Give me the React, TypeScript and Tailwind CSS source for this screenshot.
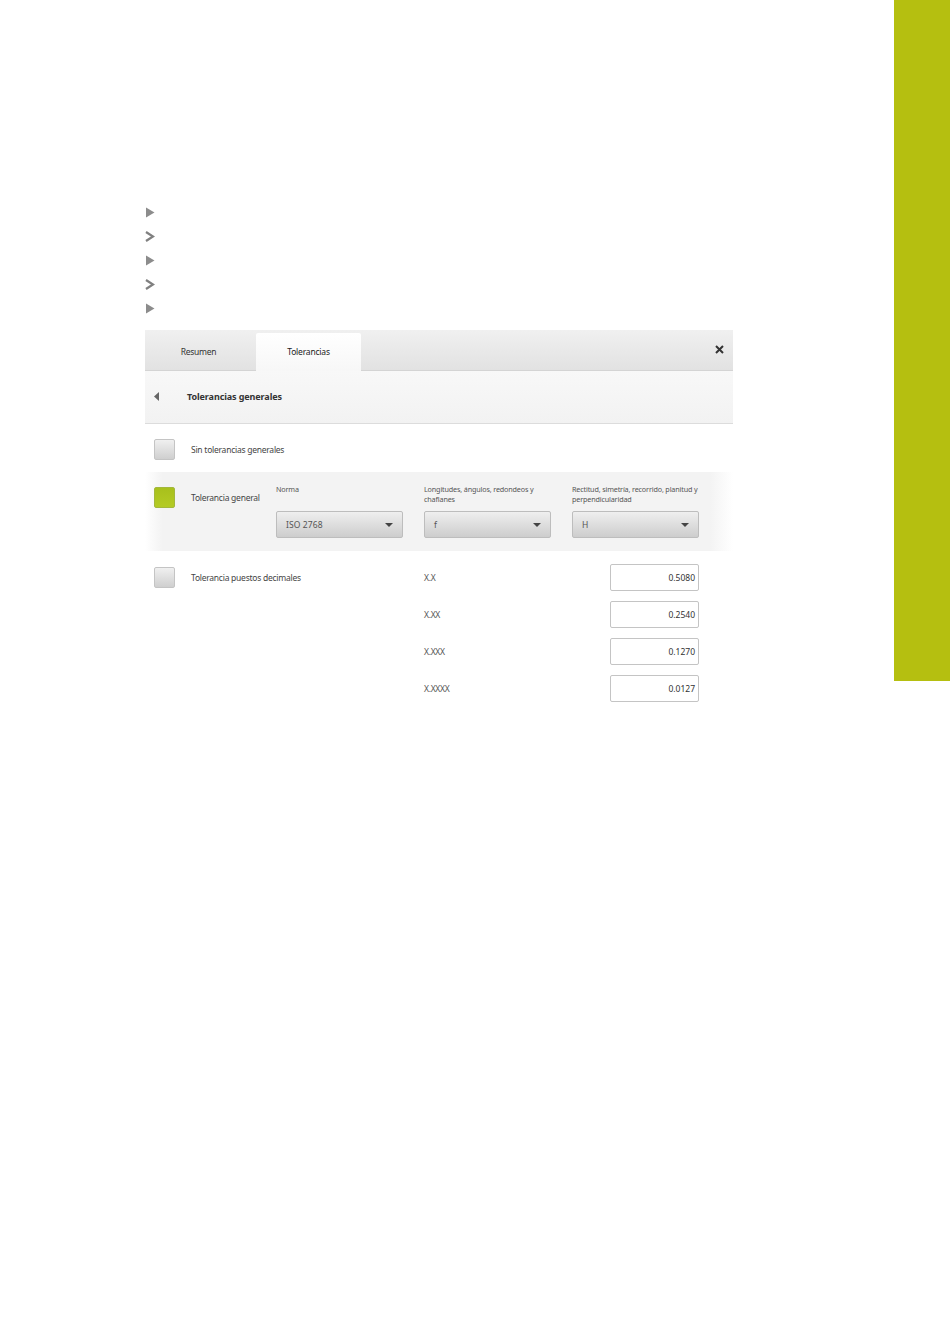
const font = "[font-family:'Noto_Sans',sans-serif]";

function Tri() {
  return (
    <svg width="10" height="11" viewBox="0 0 10 11" className="block">
      <path d="M1 0.5 L9.5 5.5 L1 10.5 Z" fill="#8c8c8c" />
    </svg>
  );
}
function Chev() {
  return (
    <svg width="10" height="11" viewBox="0 0 10 11" className="block">
      <path d="M1 1 L8 5.5 L1 10" fill="none" stroke="#808080" strokeWidth="2.3" />
    </svg>
  );
}
function Caret() {
  return (
    <svg width="8" height="4" viewBox="0 0 8 4" className="block">
      <path d="M0 0 H8 L4 4 Z" fill="#444" />
    </svg>
  );
}
function Check({ on = false }: { on?: boolean }) {
  return (
    <div
      className={
        on
          ? "w-[21px] h-[21px] shrink-0 rounded-[2px] border border-[#a3b83c] bg-gradient-to-b from-[#a8c01c] to-[#b4cb24]"
          : "w-[21px] h-[21px] shrink-0 rounded-[2px] border border-[#c4c4c4] bg-gradient-to-b from-[#f0f0f0] to-[#cfcfcf]"
      }
    />
  );
}
function Select({ label, value }: { label: string; value: string }) {
  return (
    <div className="w-[127px] shrink-0 flex flex-col">
      <div className="h-[39px] pt-[12px] text-[7.2px] leading-[10px] tracking-[-0.15px] text-[#555]">{label}</div>
      <div className="h-[27px] rounded-[2px] border border-[#bdbdbd] bg-gradient-to-b from-[#efefef] to-[#cdcdcd] flex items-center justify-between pl-[9px] pr-[9px]">
        <span className="text-[8.5px] tracking-[0.1px] text-[#555] pt-[1px]">{value}</span>
        <Caret />
      </div>
    </div>
  );
}
function Dec({ label, value }: { label: string; value: string }) {
  return (
    <div className="h-[27px] flex items-center justify-between">
      <span className="text-[8.5px] tracking-[-0.3px] text-[#555] pt-[1px]">{label}</span>
      <div className="w-[89px] h-[27px] rounded-[2px] border border-[#c4c4c4] bg-white flex items-center justify-end pr-[3px] pt-[1px] text-[8.5px] text-[#333]">
        {value}
      </div>
    </div>
  );
}

export default function App() {
  return (
    <div className={`${font} w-[950px] h-[1344px] bg-white flex`}>
      <main className="w-[894px] pl-[145px] pt-[200px]">
        <div className="flex flex-col">
          {[<Tri />, <Chev />, <Tri />, <Chev />, <Tri />].map((icon, i) => (
            <div key={i} className="h-[24px] flex items-center">
              {icon}
            </div>
          ))}
        </div>
        <section className="w-[588px] mt-[10px]">
          <div className="h-[41px] flex items-end bg-gradient-to-b from-[#f0f0f0] to-[#e2e2e2] border-b border-[#d4d4d4]">
            <div className="w-[111px] h-[40px] flex items-center justify-center text-[8.5px] tracking-[-0.25px] text-[#333] pt-[5px] pr-[4px]">
              Resumen
            </div>
            <div className="w-[105px] h-[38px] -mb-px flex items-center justify-center bg-gradient-to-b from-white to-[#f7f7f7] rounded-t-[2px] text-[8.5px] tracking-[-0.2px] text-[#222]">
              Tolerancias
            </div>
            <div className="flex-1 h-full flex items-center justify-end pr-[9px] pb-[2px]">
              <svg width="9" height="9" viewBox="0 0 9 9" className="block">
                <path d="M1 1 L8 8 M8 1 L1 8" stroke="#333" strokeWidth="2" />
              </svg>
            </div>
          </div>
          <div className="h-[53px] bg-gradient-to-b from-[#f8f8f8] to-[#f2f2f2] border-b border-[#dcdcdc] flex items-center pl-[9px]">
            <svg width="5" height="9" viewBox="0 0 5 9" className="block -mt-[1px]">
              <path d="M5 0 V9 L0 4.5 Z" fill="#666" />
            </svg>
            <span className="ml-[28px] text-[9px] font-bold tracking-[-0.1px] text-[#333]">Tolerancias generales</span>
          </div>
          <div className="h-[48px] flex items-start pt-[15px] pl-[9px]">
            <Check />
            <span className="ml-[16px] mt-[5px] text-[8.5px] tracking-[-0.25px] text-[#444]">Sin tolerancias generales</span>
          </div>
          <div className="h-[79px] flex bg-[linear-gradient(to_right,#ffffff,#f3f3f3_3%,#f3f3f3_96%,#ffffff)] pl-[9px]">
            <div className="w-[122px] shrink-0 flex items-start pt-[15px]">
              <Check on />
              <span className="ml-[16px] mt-[5px] text-[8.5px] tracking-[-0.25px] text-[#444]">Tolerancia general</span>
            </div>
            <div className="flex gap-[21px]">
              <Select label="Norma" value="ISO 2768" />
              <Select label="Longitudes, ángulos, redondeos y chaflanes" value="f" />
              <Select label="Rectitud, simetría, recorrido, planitud y perpendicularidad" value="H" />
            </div>
          </div>
          <div className="flex pl-[9px] pt-[13px]">
            <div className="w-[270px] shrink-0 flex items-start pt-[3px]">
              <Check />
              <span className="ml-[16px] mt-[5px] text-[8.5px] tracking-[-0.25px] text-[#444]">Tolerancia puestos decimales</span>
            </div>
            <div className="w-[275px] flex flex-col gap-[10px]">
              <Dec label="X.X" value="0.5080" />
              <Dec label="X.XX" value="0.2540" />
              <Dec label="X.XXX" value="0.1270" />
              <Dec label="X.XXXX" value="0.0127" />
            </div>
          </div>
        </section>
      </main>
      <aside className="w-[56px] h-[681px] bg-[#b5bf10]" />
    </div>
  );
}
